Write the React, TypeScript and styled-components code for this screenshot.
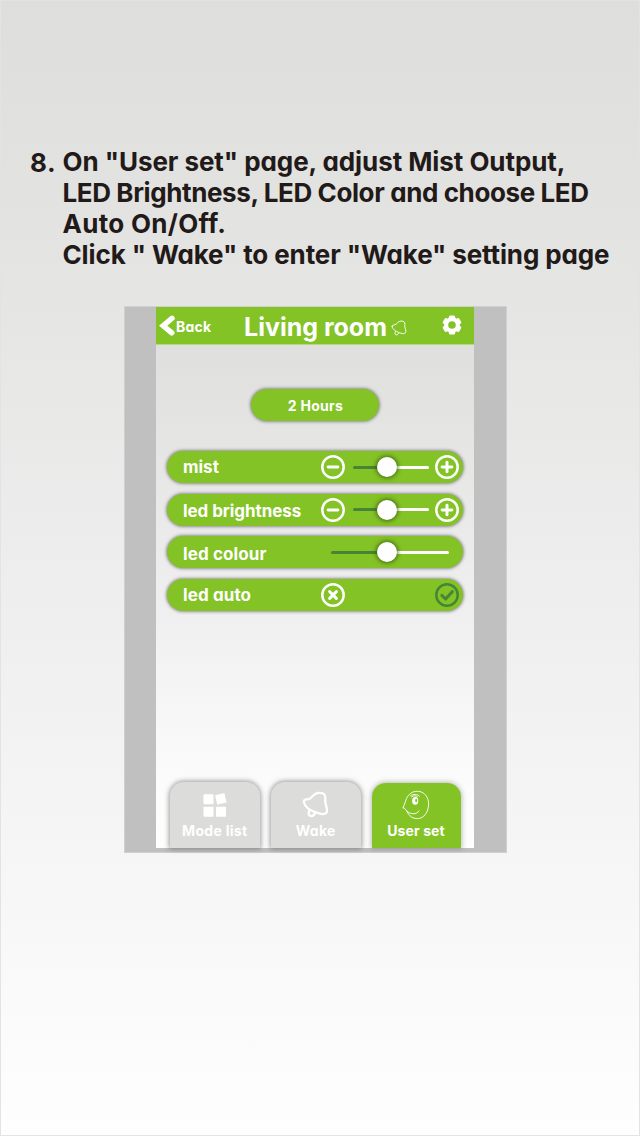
import React from "react";
import styled, { createGlobalStyle } from "styled-components";

const GREEN = "#83c326";
const DARK_GREEN = "#458535";

const GlobalStyle = createGlobalStyle`
  * { box-sizing: border-box; }
  body { margin: 0; }
`;

const Page = styled.main`
  width: 640px;
  height: 1136px;
  display: flex;
  flex-direction: column;
  border: 1px solid #e3e3e3;
  background: linear-gradient(#dededc 0%, #e3e3e2 20%, #f0f0f0 58%, #fefefe 100%);
  font-family: Inter, "Open Sans", sans-serif;
  font-feature-settings: "cv11", "calt" 0;
  font-weight: 700;
  overflow: hidden;
`;

const Intro = styled.section`
  display: flex;
  padding: 145px 0 0 29px;
  height: 305px;
  color: #211a18;
  font-size: 26px;
  line-height: 31px;
`;

const StepNumber = styled.div`
  width: 32.5px;
  letter-spacing: 0.5px;
  padding-top: 1px;
`;

const Line = styled.div<{ $spacing: number }>`
  white-space: pre;
  letter-spacing: ${(p) => p.$spacing}px;
`;

const Device = styled.section`
  width: 383px;
  height: 547px;
  margin-left: 123px;
  padding: 0 32px 4px;
  border: 1px solid #d0d0d0;
  background: #c0c0c0;
`;

const Screen = styled.div`
  display: flex;
  flex-direction: column;
  height: 541px;
  width: 318px;
  margin-left: -1px;
  background: linear-gradient(#dededd 0%, #e0e0df 10%, #f0f0f0 58%, #fdfdfd 92%, #fefefe 100%);
`;

const Header = styled.header`
  display: flex;
  align-items: center;
  height: 38px;
  flex: none;
  padding: 0 12px 2px 3px;
  background: ${GREEN};
  border-bottom: 1px solid #b5d982;
  color: #fff;
`;

const Back = styled.div`
  display: flex;
  align-items: center;
  width: 85px;
  gap: 0;
  font-size: 14px;
  letter-spacing: 0.2px;
  padding-top: 3px;
`;

const Title = styled.h1`
  margin: 0;
  width: 147px;
  padding-top: 4px;
  font-size: 25px;
  line-height: 30px;
  letter-spacing: 0;
  white-space: nowrap;
`;

const BellSlot = styled.div`
  display: flex;
  width: 51px;
  padding-top: 6px;
`;

const Content = styled.div`
  flex: 1;
  display: flex;
  flex-direction: column;
  align-items: center;
  padding-top: 44px;
`;

const pill = `
  background: ${GREEN};
  color: #fff;
  border-radius: 17px;
  box-shadow: 0 0 3px 1px rgba(60, 50, 60, 0.5);
`;

const Duration = styled.div`
  ${pill}
  width: 128px;
  height: 32px;
  line-height: 33px;
  text-align: center;
  font-size: 14px;
  letter-spacing: 0.3px;
  padding-left: 1px;
`;

const Settings = styled.div`
  display: flex;
  flex-direction: column;
  gap: 10.7px;
  margin-top: 30px;
`;

const Row = styled.div`
  ${pill}
  width: 296px;
  height: 32px;
  display: flex;
  align-items: center;
  padding-left: 16px;
`;

const Label = styled.div<{ $spacing: number; $drop: number }>`
  width: 138px;
  flex: none;
  font-size: 17px;
  line-height: 20px;
  white-space: nowrap;
  letter-spacing: ${(p) => p.$spacing}px;
  padding-top: ${(p) => p.$drop}px;
`;

const Track = styled.div<{ $wide?: boolean }>`
  display: flex;
  align-items: center;
  width: ${(p) => (p.$wide ? 118 : 76)}px;
  margin: 0 ${(p) => (p.$wide ? 0 : 6)}px 0 ${(p) => (p.$wide ? 10 : 8)}px;
`;

const Rail = styled.div<{ $color: string; $width: number }>`
  width: ${(p) => p.$width}px;
  height: 3px;
  border-radius: 2px;
  background: ${(p) => p.$color};
`;

const Knob = styled.div`
  width: 20px;
  height: 20px;
  margin: 0 -1px;
  border-radius: 50%;
  background: #fff;
  box-shadow: 0 0 4px 1px rgba(50, 75, 10, 0.75);
  z-index: 1;
`;

const Controls = styled.div`
  display: flex;
  align-items: center;
`;

const Gap = styled.div`
  width: 90px;
`;

const Tabs = styled.nav`
  display: flex;
  align-items: flex-end;
  gap: 10.5px;
  height: 66px;
  padding-left: 13.5px;
`;

const Tab = styled.div<{ $active?: boolean }>`
  display: flex;
  flex-direction: column;
  align-items: center;
  justify-content: flex-end;
  width: ${(p) => (p.$active ? 89 : 90.5)}px;
  height: ${(p) => (p.$active ? 65 : 66)}px;
  padding-bottom: 8px;
  border-radius: 14px 14px 0 0;
  background: ${(p) => (p.$active ? GREEN : "#dcdcda")};
  box-shadow: 0 0 5px 1px rgba(90, 90, 90, ${(p) => (p.$active ? 0.4 : 0.6)});
  color: #fff;
  font-size: 14px;
  line-height: 18px;
  white-space: nowrap;
`;

const TabLabel = styled.span<{ $spacing: number; $top: number }>`
  letter-spacing: ${(p) => p.$spacing}px;
  margin-top: ${(p) => p.$top}px;
`;

type SignKind = "minus" | "plus" | "cross" | "check";
const signs: Record<SignKind, string> = {
  minus: "M7.3 12.2h9.8",
  plus: "M7.3 12.2h9.8M12.2 7.3v9.8",
  cross: "M8.8 8.8l6.8 6.8M15.6 8.8l-6.8 6.8",
  check: "M7 12.6l3.8 3.6 6.8-7.4",
};

const Sign = ({ kind }: { kind: SignKind }) => (
  <svg width="24" height="24" viewBox="0.1 0.1 24.2 24.2" fill="none" stroke={kind === "check" ? DARK_GREEN : "#fff"} strokeWidth="2.5" strokeLinecap="round">
    <circle cx="12.2" cy="12.2" r="10.8" />
    <path d={signs[kind]} strokeWidth="3" />
  </svg>
);

const Bell = ({ size, stroke }: { size: number; stroke: number }) => (
  <svg width={size} height={size} viewBox="0 0 28 28" fill="none" stroke="#fff" strokeWidth={stroke} strokeLinejoin="round" strokeLinecap="round">
    <path d="M2 11.5C1.5 9 4 8.6 6.8 8.4C10 7.8 11.5 3.2 15.5 2.3C18 1.6 20.5 1.6 22.8 3.2C25.3 5.5 23.8 8.5 24.2 12C24.6 15 27.3 20 25.3 22.6C23.5 24.4 20 24 17.5 23.2C11 21.4 3 17.5 2 11.5Z" />
    <path d="M8.2 19.8C6.3 21.3 6.3 25.6 9.2 26C11.6 26.2 12.9 24.5 13.5 22.6" />
  </svg>
);

const Chevron = () => (
  <svg width="17" height="22" viewBox="0 0 17 22" fill="none" stroke="#fff" strokeWidth="5.4" strokeLinecap="round" strokeLinejoin="miter">
    <path d="M13 3.3L4.2 10.8L12.8 17.8" />
  </svg>
);

const Gear = () => (
  <svg width="20" height="20" viewBox="0 0 20 20">
    <g fill="#fff">
      {[0, 60, 120].map((a) => (
        <rect key={a} x="6.8" y="0.5" width="6.4" height="19" rx="1.5" transform={`rotate(${a} 10 10)`} />
      ))}
      <circle cx="10" cy="10" r="7.8" />
    </g>
    <circle cx="10" cy="10" r="3.8" fill={GREEN} />
  </svg>
);

const Tiles = () => (
  <svg width="24" height="24" viewBox="0 0 24 24" fill="#fff">
    <rect x="0.5" y="1.2" width="10" height="10" rx="0.8" />
    <rect x="0.5" y="13.7" width="10" height="10" rx="0.8" />
    <rect x="13" y="13.7" width="10" height="10" rx="0.8" />
    <rect x="13" y="1" width="9.6" height="9.8" rx="0.8" transform="rotate(-13 17.7 5.9)" />
  </svg>
);

const Face = () => (
  <svg width="28" height="30" viewBox="0 0 28 30" fill="none" stroke="#fff" strokeWidth="0.9" strokeLinecap="round">
    <path d="M1.2 17.8C2.5 14 3.5 11.5 4.5 8.5C7 3.5 10.5 1.3 15.5 1.3C22.5 1.3 26.8 7.5 26.6 14.5C26.4 22 22 28.6 15.5 28.6C8.5 28.6 6.2 24 4 19.8C3.3 18.6 1.8 18.4 1.2 17.8Z" />
    <path d="M4.5 20.5C7.5 24.8 15 25 17 20.8M8.5 5.8C11 3.6 15.5 4 17.5 6.2M9.5 6.8C11.5 5.3 14 5.3 15.5 6.8" />
    <ellipse cx="13.2" cy="10.8" rx="3.1" ry="3.9" fill="#fff" stroke="none" />
    <ellipse cx="14.2" cy="10.6" rx="1" ry="1.8" fill={GREEN} stroke="none" />
  </svg>
);

const Slider = ({ wide }: { wide?: boolean }) => (
  <Track $wide={wide}>
    <Rail $color={DARK_GREEN} $width={wide ? 47 : 25} />
    <Knob />
    <Rail $color="#fff" $width={wide ? 53 : 33} />
  </Track>
);

export default function App() {
  return (
    <>
      <GlobalStyle />
      <Page>
        <Intro>
          <StepNumber>8.</StepNumber>
          <div>
            <Line $spacing={-0.07}>{'On "User set" page, adjust Mist Output,'}</Line>
            <Line $spacing={-0.39}>LED Brightness, LED Color and choose LED</Line>
            <Line $spacing={0.3}>Auto On/Off.</Line>
            <Line $spacing={-0.12}>{'Click " Wake" to enter "Wake" setting page'}</Line>
          </div>
        </Intro>
        <Device>
          <Screen>
            <Header>
              <Back><Chevron />Back</Back>
              <Title>Living room</Title>
              <BellSlot><Bell size={16} stroke={1.6} /></BellSlot>
              <Gear />
            </Header>
            <Content>
              <Duration>2 Hours</Duration>
              <Settings>
                <Row>
                  <Label $spacing={0} $drop={0}>mist</Label>
                  <Controls><Sign kind="minus" /><Slider /><Sign kind="plus" /></Controls>
                </Row>
                <Row>
                  <Label $spacing={-0.07} $drop={2}>led brightness</Label>
                  <Controls><Sign kind="minus" /><Slider /><Sign kind="plus" /></Controls>
                </Row>
                <Row>
                  <Label $spacing={0.1} $drop={3}>led colour</Label>
                  <Slider wide />
                </Row>
                <Row>
                  <Label $spacing={0.1} $drop={0}>led auto</Label>
                  <Controls><Sign kind="cross" /><Gap /><Sign kind="check" /></Controls>
                </Row>
              </Settings>
            </Content>
            <Tabs>
              <Tab><Tiles /><TabLabel $spacing={0.3} $top={5}>Mode list</TabLabel></Tab>
              <Tab><Bell size={27} stroke={2.4} /><TabLabel $spacing={0.3} $top={4}>Wake</TabLabel></Tab>
              <Tab $active><Face /><TabLabel $spacing={0.1} $top={2}>User set</TabLabel></Tab>
            </Tabs>
          </Screen>
        </Device>
      </Page>
    </>
  );
}
